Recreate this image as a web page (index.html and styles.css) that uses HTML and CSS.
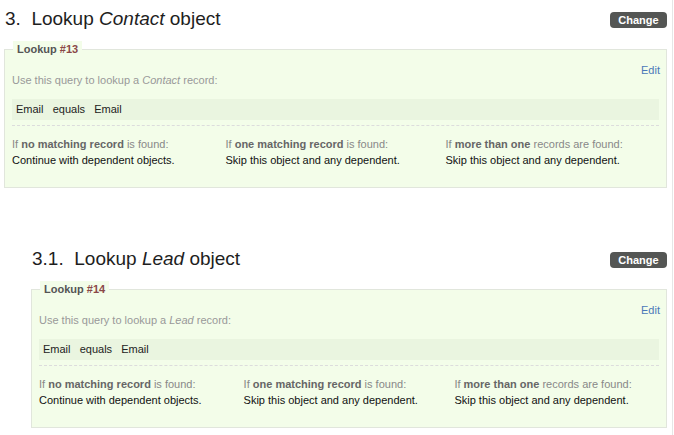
FILE: index.html
```html
<html>
  <head>
    <title>Lookup objects</title>
    <meta charset="utf-8" />
    <link rel="stylesheet" href="styles.css">
  </head>
  <body>
    <div class="page">
      <div class="section">
        <div class="section-head">
          <h2>3.&nbsp; Lookup <em>Contact</em> object</h2>
          <button type="button" class="change">Change</button>
        </div>
        <fieldset class="lookup">
          <legend>Lookup <span class="num">#13</span></legend>
          <a href="#" class="edit">Edit</a>
          <p class="hint">Use this query to lookup a <em>Contact</em> record:</p>
          <div class="query">Email &nbsp; equals &nbsp; Email</div>
          <div class="results">
            <div class="col">
              <div class="label">If <b>no matching record</b> is found:</div>
              <div class="value">Continue with dependent objects.</div>
            </div>
            <div class="col">
              <div class="label">If <b>one matching record</b> is found:</div>
              <div class="value">Skip this object and any dependent.</div>
            </div>
            <div class="col">
              <div class="label">If <b>more than one</b> records are found:</div>
              <div class="value">Skip this object and any dependent.</div>
            </div>
          </div>
        </fieldset>
      </div>

      <div class="section sub">
        <div class="section-head">
          <h2>3.1.&nbsp; Lookup <em>Lead</em> object</h2>
          <button type="button" class="change">Change</button>
        </div>
        <fieldset class="lookup">
          <legend>Lookup <span class="num">#14</span></legend>
          <a href="#" class="edit">Edit</a>
          <p class="hint">Use this query to lookup a <em>Lead</em> record:</p>
          <div class="query">Email &nbsp; equals &nbsp; Email</div>
          <div class="results">
            <div class="col">
              <div class="label">If <b>no matching record</b> is found:</div>
              <div class="value">Continue with dependent objects.</div>
            </div>
            <div class="col">
              <div class="label">If <b>one matching record</b> is found:</div>
              <div class="value">Skip this object and any dependent.</div>
            </div>
            <div class="col">
              <div class="label">If <b>more than one</b> records are found:</div>
              <div class="value">Skip this object and any dependent.</div>
            </div>
          </div>
        </fieldset>
      </div>
    </div>
  </body>
</html>
```

FILE: styles.css
```css
* {
  padding: 0;
  margin: 0;
  box-sizing: border-box;
}
body  {
  font-family: "Liberation Sans", Arial, sans-serif;
  font-size: 11px;
  color: #111;
  background: white;
}
.page  {
  width: 673px;
  min-height: 435px;
  border-right: 1px solid #e6e6e6;
}
.section  {
  padding: 7px 5px 0 4px;
}
.section + .section  {
  margin-top: 52px;
}
.section.sub  {
  margin-left: 27px;
}
.section-head  {
  display: flex;
  justify-content: space-between;
  align-items: center;
}
h2  {
  font-size: 19px;
  line-height: 24px;
  font-weight: 400;
  color: #1e1e1e;
  padding-left: 1px;
}
.change  {
  font-family: "Liberation Sans", Arial, sans-serif;
  font-size: 11px;
  font-weight: bold;
  color: white;
  background: #545654;
  border: none;
  border-radius: 4px;
  width: 57px;
  height: 16px;
  line-height: 16px;
  margin-top: 2px;
}
.lookup  {
  margin-top: 10px;
  background: #f3fde9;
  border: 1px solid #e1e6dc;
  padding: 6px 7px 0 7px;
}
.lookup legend  {
  background: #f3fde9;
  font-weight: bold;
  color: #555;
  line-height: 16px;
  padding: 0 4px;
  margin-left: 1px;
}
.lookup legend .num  {
  color: #8a4848;
}
.edit  {
  float: right;
  color: #4a78b8;
  text-decoration: none;
  line-height: 14px;
  margin-right: -1px;
}
.hint  {
  color: #999;
  line-height: 14px;
  padding-top: 10px;
}
.query  {
  margin-top: 12px;
  background: #eaf5e0;
  line-height: 21px;
  padding-left: 4px;
  color: #222;
}
.results  {
  margin-top: 5px;
  border-top: 1px dashed #dcdcdc;
  padding: 10px 0 19px 0;
  display: grid;
  grid-template-columns: 33% 34% 33%;
  line-height: 16px;
}
.label  {
  color: #888;
}
.label b  {
  color: #666;
}
.value  {
  color: #111;
}
```
